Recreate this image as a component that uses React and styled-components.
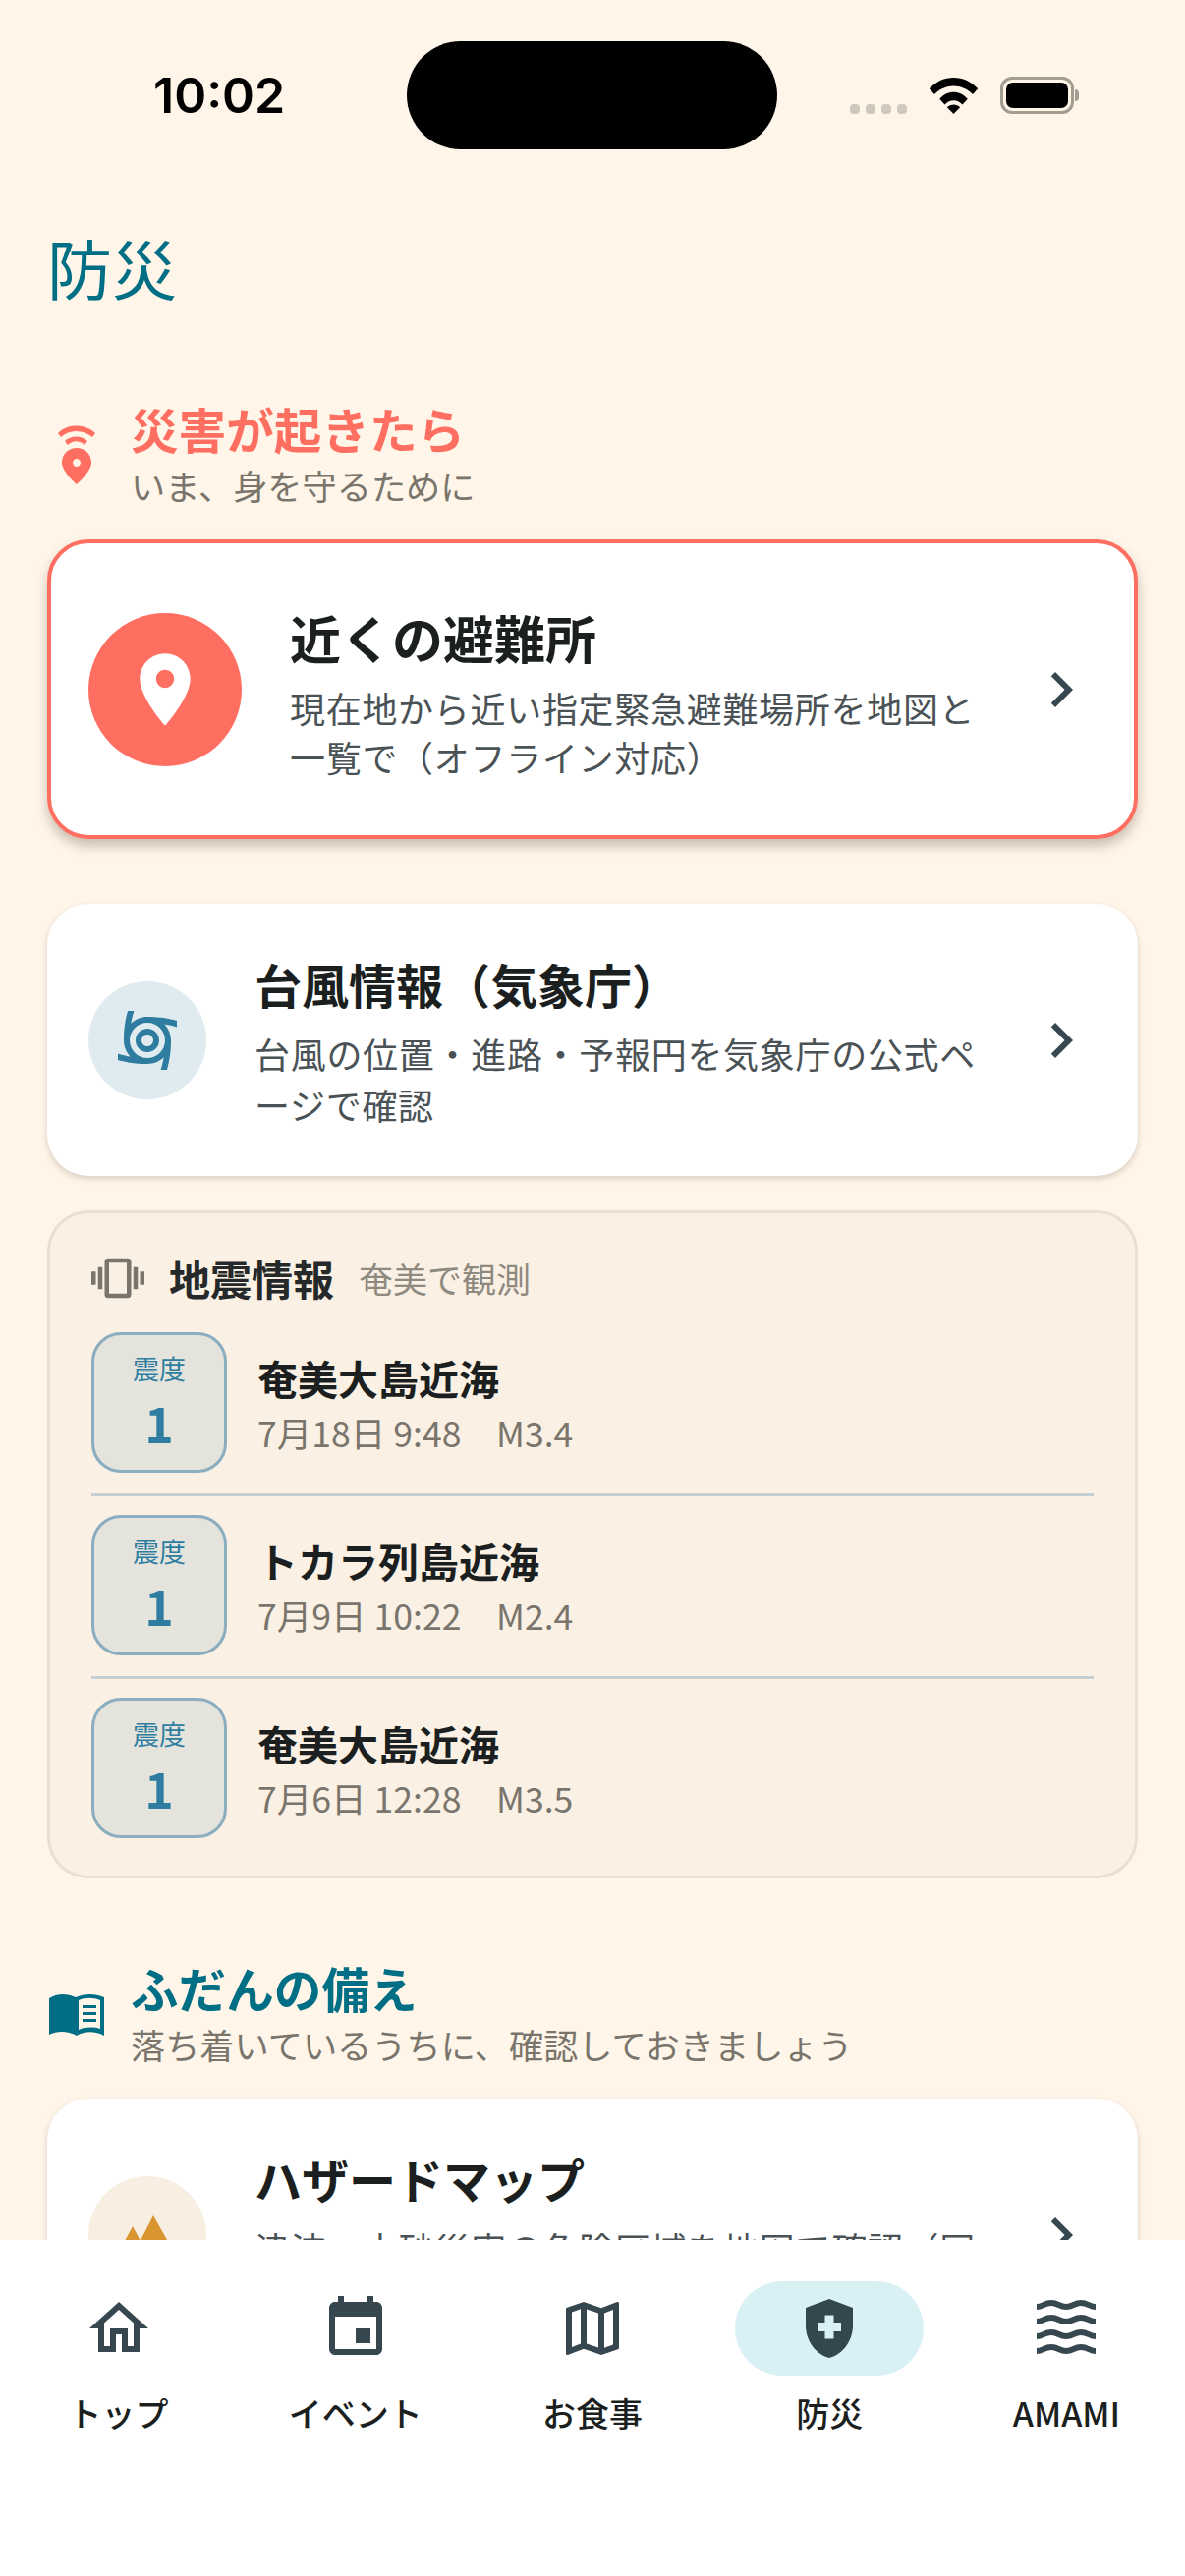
import React from "react";
import styled, { createGlobalStyle } from "styled-components";

const Global = createGlobalStyle`
  html, body { margin: 0; padding: 0; background: #fff5e9; }
  * { box-sizing: border-box; }
  body { font-family: "Noto Sans CJK JP", "Noto Sans", sans-serif; }
`;

const Phone = styled.div`
  width: 1206px; height: 2622px; display: flex; flex-direction: column;
  background: #fff5e9; overflow: hidden;
`;
const Scroll = styled.main`
  flex: 1; min-height: 0; overflow: hidden; padding: 0 48px;
`;
const Status = styled.header`
  height: 231px; margin: 0 -48px; padding: 42px 106px 0 156px; display: flex; align-items: flex-start;
`;
const Time = styled.div`
  font: 600 50px/110px Inter, sans-serif; color: #000; width: 258px;
`;
const Island = styled.div`
  width: 377px; height: 110px; border-radius: 55px; background: #000;
`;
const StatusRight = styled.div`
  margin-left: 74px; height: 74px; display: flex; align-items: flex-end;
`;
const Dots = styled.div`
  display: flex; gap: 6px; margin-right: 22px;
`;
const Dot = styled.span`
  width: 10px; height: 10px; border-radius: 4px; background: #cfc9bd;
`;
const Battery = styled.div`
  position: relative; width: 75px; height: 38px; margin-left: 22px; border: 3px solid #a39c90; border-radius: 12px; padding: 3px;
  &::before { content: ""; display: block; width: 100%; height: 100%; background: #000; border-radius: 7px; }
  &::after { content: ""; position: absolute; right: -8px; top: 10px; width: 4px; height: 12px; background: #a39c90; border-radius: 0 4px 4px 0; }
`;
const PageTitle = styled.h1`
  margin: 0; font-size: 66px; line-height: 80px; font-weight: 400; color: #006e85;
`;
const SectionHead = styled.div`
  display: flex; align-items: center; margin-top: ${p => p.$mt}px; margin-bottom: ${p => p.$mb}px;
`;
const SectionIconBox = styled.div`
  width: 85px; height: 60px; flex: none; display: flex; align-items: center; padding-left: ${p => p.$pl || 0}px;
`;
const SectionText = styled.div`display: flex; flex-direction: column;`;
const SectionTitle = styled.h2`
  margin: 0; font-size: 48.6px; line-height: 60px; font-weight: 700; color: ${p => p.$c};
`;
const SectionSub = styled.p`
  margin: 3px 0 0; font-size: 35.2px; line-height: 50px; color: #7a756c; font-weight: 400;
`;
const Card = styled.section`
  background: #fff; border-radius: 42px; display: flex; align-items: center;
  margin-bottom: ${p => p.$mb || 0}px;
  height: ${p => p.$h}px; gap: 49px;
  border: ${p => p.$alert ? "4px solid #ff6f61" : "0"};
  padding: 0 ${p => p.$alert ? 38 : 42}px;
  box-shadow: ${p => p.$alert ? "0 7px 12px rgba(90,70,50,.32)" : "0 3px 6px rgba(90,70,50,.22)"};
`;
const Circle = styled.div`
  width: ${p => p.$s}px; height: ${p => p.$s}px; border-radius: 50%; background: ${p => p.$bg};
  flex: none; display: flex; align-items: center; justify-content: center;
`;
const CardText = styled.div`
  flex: 1; min-width: 0; display: flex; flex-direction: column; padding-top: ${p => p.$alert ? 10 : 3}px;
`;
const CardTitle = styled.h3`
  margin: 0 0 ${p => p.$alert ? 16 : 15}px; font-size: ${p => p.$alert ? 52 : 48}px; line-height: 60px; font-weight: 700; color: #1b1f20;
`;
const CardDesc = styled.p`
  margin: 0; font-size: 36px; line-height: ${p => p.$alert ? 50 : 52}px; color: #4a5256; letter-spacing: .7px; line-break: anywhere;
`;
const Chevron = styled.svg`flex: none; width: 72px; height: 72px; margin-left: -25px; fill: #37474f;`;
const Quake = styled.section`
  margin-top: 35px; height: 680px; border: 3px solid #e9dfd3; border-radius: 42px; background: #fbf0e4; padding: 31px 42px 0;
`;
const QuakeHead = styled.div`display: flex; align-items: center; height: 70px; margin-bottom: 20px;`;
const QuakeTitle = styled.h3`
  margin: 0 0 0 25px; font-size: 42px; line-height: 60px; color: #25292a; font-weight: 700;
`;
const QuakeSub = styled.span`
  margin-left: 25px; font-size: 35px; color: #8f8a80; line-height: 60px;
`;
const Row = styled.div`
  display: flex; align-items: center; gap: 31px; height: 186px; padding-bottom: 43px;
`;
const Rows = styled.div`display: flex; flex-direction: column;`;
const Divider = styled.hr`
  margin: -22px 0 19px; border: 0; height: 3px; background: #c4cfd3; flex: none;
`;
const Badge = styled.div`
  width: 138px; height: 143px; flex: none; border: 3px solid #8badc0; border-radius: 30px; background: #e4e3dc;
  display: flex; flex-direction: column; align-items: center; padding-top: 14px;
`;
const BadgeLabel = styled.span`font-size: 27px; line-height: 40px; color: #2e7da0;`;
const BadgeValue = styled.span`font-size: 50px; line-height: 64px; color: #2e7da0; font-weight: 700; margin-top: 2px;`;
const PlaceText = styled.div`padding-top: 3px;`;
const Place = styled.div`font-size: 41px; line-height: 58px; font-weight: 700; color: #1b1f20;`;
const Meta = styled.div`font-size: 35.6px; line-height: 54px; color: #7a756c; white-space: pre;`;
const Nav = styled.nav`
  height: 342px; flex: none; background: #fff; display: grid; grid-template-columns: repeat(5, 1fr); padding-top: 42px;
  position: relative;
`;
const NavItem = styled.div`display: flex; flex-direction: column; align-items: center;`;
const NavIcon = styled.div`
  width: 192px; height: 96px; border-radius: 48px; display: flex; align-items: center; justify-content: center;
  background: ${p => p.$active ? "#d9f1f5" : "transparent"};
`;
const NavLabel = styled.span`
  margin-top: 13px; font-size: 34px; line-height: 50px; font-weight: 500; color: #1b1f20;
`;
const I = styled.svg`width: ${p => p.$s}px; height: ${p => p.$h || p.$s}px; fill: ${p => p.$c}; display: block;`;

const IC = "#37474f";
const events = [
  ["奄美大島近海", "7月18日 9:48　M3.4"],
  ["トカラ列島近海", "7月9日 10:22　M2.4"],
  ["奄美大島近海", "7月6日 12:28　M3.5"],
];
const ChevronIcon = () => <Chevron viewBox="0 0 24 24"><path d="M10 6L8.59 7.41 13.17 12l-4.58 4.59L10 18l6-6z" /></Chevron>;
const navs = [
  ["トップ", <I key="a" $s={72} $c={IC} viewBox="0 0 24 24"><path d="M12 5.69l5 4.5V18h-2v-6H9v6H7v-7.81l5-4.5M12 3L2 12h3v8h6v-6h2v6h6v-8h3L12 3z" /></I>],
  ["イベント", <I key="b" $s={72} $c={IC} viewBox="0 0 24 24"><path d="M17 12h-5v5h5v-5zM16 1v2H8V1H6v2H5c-1.11 0-1.99.9-1.99 2L3 19c0 1.1.89 2 2 2h14c1.1 0 2-.9 2-2V5c0-1.1-.9-2-2-2h-1V1h-2zm3 18H5V8h14v11z" /></I>],
  ["お食事", <I key="c" $s={72} $c={IC} viewBox="0 0 24 24"><path d="M20.5 3l-.16.03L15 5.1 9 3 3.36 4.9c-.21.07-.36.25-.36.48V20.5c0 .28.22.5.5.5l.16-.03L9 18.9l6 2.1 5.64-1.9c.21-.07.36-.25.36-.48V3.5c0-.28-.22-.5-.5-.5zM10 5.47l4 1.4v11.66l-4-1.4V5.47zm-5 .99l3-1.01v11.7l-3 1.16V6.46zm14 11.08l-3 1.01V6.86l3-1.16v11.84z" /></I>],
  ["防災", <I key="d" $s={72} $c="#33474f" viewBox="0 0 24 24"><path d="M10.5 13H8v-3h2.5V7.5h3V10H16v3h-2.5v2.5h-3V13zM12 2L4 5v6.09c0 5.05 3.41 9.76 8 10.91 4.59-1.15 8-5.86 8-10.91V5l-8-3z" /></I>],
  ["AMAMI", <I key="e" $s={72} $c="none" viewBox="0 0 72 72"><g fill="none" stroke={IC} strokeWidth="6"><path d="M6 14c6 0 8-4 15-4s8 4 15 4 8-4 15-4 9 4 15 4" /><path d="M6 29c6 0 8-4 15-4s8 4 15 4 8-4 15-4 9 4 15 4" /><path d="M6 44c6 0 8-4 15-4s8 4 15 4 8-4 15-4 9 4 15 4" /><path d="M6 59c6 0 8-4 15-4s8 4 15 4 8-4 15-4 9 4 15 4" /></g></I>],
];

export default function App() {
  return (
    <Phone>
      <Global />
      <Scroll>
        <Status>
          <Time>10:02</Time>
          <Island />
          <StatusRight>
            <Dots><Dot /><Dot /><Dot /><Dot /></Dots>
            <I $s={51} $h={38} $c="#000" viewBox="0 0 52 40"><path d="M0 13 C14 -3 38 -3 52 13 L46.5 19 C35 7 17 7 5.5 19Z M11 24 C19 14 33 14 41 24 L35.5 30 C30 24 22 24 16.5 30Z M19 33 C23 29 29 29 33 33 L26 40Z" /></I>
            <Battery />
          </StatusRight>
        </Status>
        <PageTitle>防災</PageTitle>
        <SectionHead $mt={95} $mb={30}>
          <SectionIconBox $pl={10}>
            <I $s={40} $h={60} $c="#ff6f61" viewBox="0 0 40 60">
              <path d="M1 8 C10 -2 29 -2 39 8 L36 12 C27 4 12 4 4 12Z M8 16 C14 10 25 10 31 16 L28 20 C23 15 16 15 11 20Z" />
              <path fillRule="evenodd" d="M20 23 C11.5 23 5 29.5 5 38 C5 47 20 60 20 60 C20 60 35 47 35 38 C35 29.5 28.5 23 20 23Z M20 34 a4 4 0 1 0 .01 0Z" />
            </I>
          </SectionIconBox>
          <SectionText>
            <SectionTitle $c="#ff6f61">災害が起きたら</SectionTitle>
            <SectionSub>いま、身を守るために</SectionSub>
          </SectionText>
        </SectionHead>
        <Card $alert $h={305} $mb={66}>
          <Circle $s={156} $bg="#ff6f61">
            <I $s={88} $c="#fff" viewBox="0 0 24 24"><path d="M12 2C8.13 2 5 5.13 5 9c0 5.25 7 13 7 13s7-7.75 7-13c0-3.87-3.13-7-7-7zm0 9.5c-1.38 0-2.5-1.12-2.5-2.5s1.12-2.5 2.5-2.5 2.5 1.12 2.5 2.5-1.12 2.5-2.5 2.5z" /></I>
          </Circle>
          <CardText $alert>
            <CardTitle $alert>近くの避難所</CardTitle>
            <CardDesc $alert>現在地から近い指定緊急避難場所を地図と一覧で（オフライン対応）</CardDesc>
          </CardText>
          <ChevronIcon />
        </Card>
        <Card $h={277}>
          <Circle $s={120} $bg="#e0ebef">
            <I $s={72} $c="#2e7da0" viewBox="0 0 24 24"><path d="M12 8c-2.21 0-4 1.79-4 4s1.79 4 4 4 4-1.79 4-4-1.79-4-4-4zm0 6c-1.1 0-2-.9-2-2s.9-2 2-2 2 .9 2 2-.9 2-2 2z" /><path d="M22 7.47V5.35C20.05 4.77 16.56 4 12 4c-2.15 0-4.11.86-5.54 2.24.13-.85.4-2.4 1.01-4.24H5.35C4.77 3.95 4 7.44 4 12c0 2.15.86 4.11 2.24 5.54-.85-.14-2.4-.4-4.24-1.01v2.12C3.95 19.23 7.44 20 12 20c2.15 0 4.11-.86 5.54-2.24-.14.85-.4 2.4-1.01 4.24h2.12c.58-1.95 1.35-5.44 1.35-10 0-2.15-.86-4.11-2.24-5.54.85.14 2.4.4 4.24 1.01zM12 18c-3.31 0-6-2.69-6-6s2.69-6 6-6 6 2.69 6 6-2.69 6-6 6z" /></I>
          </Circle>
          <CardText>
            <CardTitle>台風情報（気象庁）</CardTitle>
            <CardDesc>台風の位置・進路・予報円を気象庁の公式ページで確認</CardDesc>
          </CardText>
          <ChevronIcon />
        </Card>
        <Quake>
          <QuakeHead>
            <I $s={54} $c="#7a756c" viewBox="0 0 24 24"><path d="M0 15h2V9H0v6zm3 2h2V7H3v10zm19-8v6h2V9h-2zm-3 8h2V7h-2v10zM16.5 3h-9C6.67 3 6 3.67 6 4.5v15c0 .83.67 1.5 1.5 1.5h9c.83 0 1.5-.67 1.5-1.5v-15c0-.83-.67-1.5-1.5-1.5zM16 19H8V5h8v14z" /></I>
            <QuakeTitle>地震情報</QuakeTitle>
            <QuakeSub>奄美で観測</QuakeSub>
          </QuakeHead>
          <Rows>
            {events.map((e, i) => (
              <React.Fragment key={i}>
                <Row>
                  <Badge>
                    <BadgeLabel>震度</BadgeLabel>
                    <BadgeValue>1</BadgeValue>
                  </Badge>
                  <PlaceText>
                    <Place>{e[0]}</Place>
                    <Meta>{e[1]}</Meta>
                  </PlaceText>
                </Row>
                {i < 2 && <Divider />}
              </React.Fragment>
            ))}
          </Rows>
        </Quake>
        <SectionHead $mt={81} $mb={30}>
          <SectionIconBox $pl={2}>
            <I $s={56} $h={44} $c="#006e85" viewBox="0 0 56 44">
              <path fillRule="evenodd" d="M0 6 C8 1 18 1 27 5 C36 1 47 1 56 5 V44 C47 39 36 39 28 44 C19 39 8 39 0 43Z M30 8 V38 C37 35 45 35 52 37 V8 C45 5 37 5 30 8Z" />
              <path d="M34 13 H48 V16 H34Z M34 20 H48 V23 H34Z M34 27 H48 V30 H34Z" />
            </I>
          </SectionIconBox>
          <SectionText>
            <SectionTitle $c="#006e85">ふだんの備え</SectionTitle>
            <SectionSub>落ち着いているうちに、確認しておきましょう</SectionSub>
          </SectionText>
        </SectionHead>
        <Card $h={277}>
          <Circle $s={120} $bg="#f8efe2">
            <I $s={72} $c="#d9952f" viewBox="0 0 72 72"><path d="M21 27 L6 55 H36Z M42 16 L22 55 H64Z" /></I>
          </Circle>
          <CardText>
            <CardTitle>ハザードマップ</CardTitle>
            <CardDesc>津波・土砂災害の危険区域を地図で確認（同じ画面で避難所も）</CardDesc>
          </CardText>
          <ChevronIcon />
        </Card>
      </Scroll>
      <Nav>
        {navs.map(([label, icon], i) => (
          <NavItem key={label}>
            <NavIcon $active={i === 3}>{icon}</NavIcon>
            <NavLabel>{label}</NavLabel>
          </NavItem>
        ))}
      </Nav>
    </Phone>
  );
}
